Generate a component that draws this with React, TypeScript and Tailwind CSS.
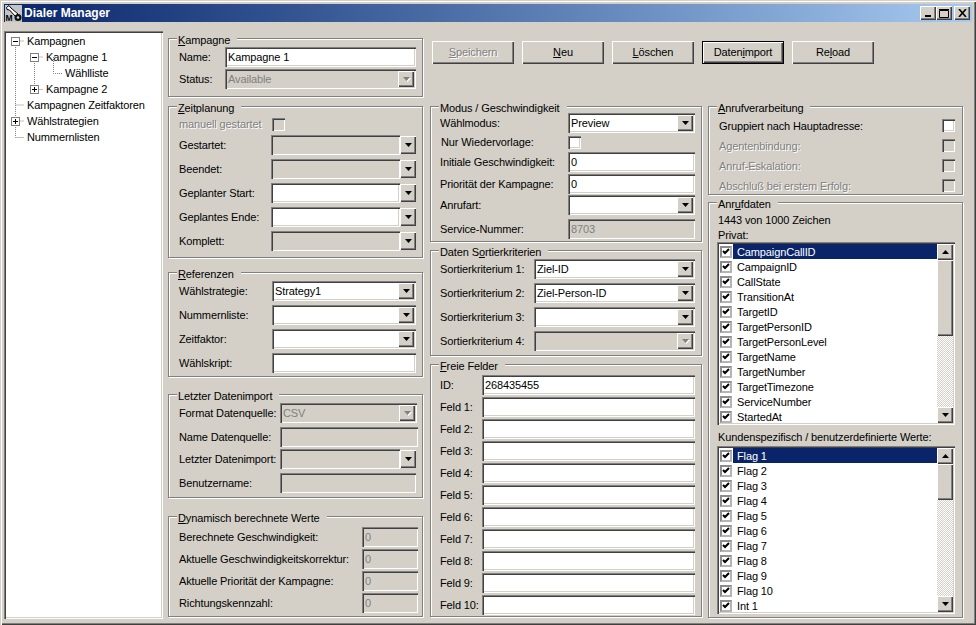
import React from "react";

const raised =
  "bg-[#d4d0c8] shadow-[inset_1px_1px_0_#fff,inset_-1px_-1px_0_#404040,inset_-2px_-2px_0_#808080]";
const sunken =
  "shadow-[inset_1px_1px_0_#808080,inset_2px_2px_0_#404040,inset_-1px_-1px_0_#fff,inset_-2px_-2px_0_#d4d0c8]";
const grayed = "text-[#808080] [text-shadow:1px_1px_0_#fff]";

const Arrow = ({ off }: { off?: boolean }) => (
  <svg width="7" height="4" viewBox="0 0 7 4" className={off ? "drop-shadow-[1px_1px_0_#fff]" : ""}>
    <path d="M0 0h7L3.5 4z" fill={off ? "#808080" : "#000"} />
  </svg>
);

const ArrowBtn = ({ off, className = "" }: { off?: boolean; className?: string }) => (
  <div className={`${raised} w-[16px] flex items-center justify-center shrink-0 ${className}`}>
    <Arrow off={off} />
  </div>
);

// plain edit field, white unless disabled
const Field = ({ className = "", off, text }: { className?: string; off?: boolean; text?: string }) => (
  <div
    className={`${sunken} h-[20px] leading-[21px] pl-[3px] shrink-0 ${off ? "bg-[#d4d0c8] text-[#808080]" : "bg-white"} ${className}`}
  >
    {text}
  </div>
);

const Combo = ({ className = "", off, text }: { className?: string; off?: boolean; text?: string }) => (
  <div
    className={`${sunken} relative h-[20px] leading-[21px] pl-[3px] shrink-0 ${off ? "bg-[#d4d0c8] text-[#808080]" : "bg-white"} ${className}`}
  >
    {text}
    <ArrowBtn off={off} className="absolute right-[2px] top-[2px] h-[16px]" />
  </div>
);

// date picker style: field with the arrow button beside it
const DateField = ({ off }: { off?: boolean }) => (
  <div className="flex">
    <Field off={off} className="w-[129px]" />
    <ArrowBtn className="h-[18px] mt-[1px]" />
  </div>
);

const Group = ({
  title,
  className = "",
  children,
}: {
  title: React.ReactNode;
  className?: string;
  children: React.ReactNode;
}) => (
  <div
    className={`relative border border-[#808080] shadow-[inset_1px_1px_0_#fff,1px_1px_0_#fff] ${className}`}
  >
    <div className="absolute left-[8px] top-[-6px] h-[14px] leading-[14px] bg-[#d4d0c8] pl-[1px] pr-[7px]">{title}</div>
    {children}
  </div>
);

const U = ({ children }: { children: React.ReactNode }) => <span className="underline underline-offset-1">{children}</span>;

const Row = ({
  label,
  labelClass,
  children,
  className = "",
}: {
  label: string;
  labelClass: string;
  children: React.ReactNode;
  className?: string;
}) => (
  <div className={`flex items-center h-[20px] ${className}`}>
    <div className={`shrink-0 whitespace-nowrap pt-[1px] ${labelClass}`}>{label}</div>
    {children}
  </div>
);

const CheckBox = ({ off }: { off?: boolean }) => (
  <div className={`${sunken} w-[13px] h-[13px] shrink-0 ${off ? "bg-[#d4d0c8]" : "bg-white"}`} />
);

const Tick = () => (
  <div className="w-[12px] h-[12px] ml-[1px] shrink-0 bg-white border-2 border-[#8c8c8c] border-b-[#b4b4b4] border-r-[#b4b4b4] flex items-center justify-center">
    <svg width="8" height="7" viewBox="0 0 8 7">
      <path d="M1 3l2 2 4-4" fill="none" stroke="#000" strokeWidth="2" />
    </svg>
  </div>
);

const ScrollBar = ({ thumbClass }: { thumbClass: string }) => (
  <div className="w-[16px] shrink-0 h-full flex flex-col bg-[repeating-conic-gradient(#fff_0_25%,#d4d0c8_0_50%)] bg-[length:2px_2px]">
    <div className={`${raised} h-[16px] shrink-0 flex items-center justify-center`}>
      <svg width="7" height="4" viewBox="0 0 7 4">
        <path d="M0 4h7L3.5 0z" fill="#000" />
      </svg>
    </div>
    <div className={`${raised} shrink-0 ${thumbClass}`} />
    <div className="flex-1" />
    <div className={`${raised} h-[16px] shrink-0 flex items-center justify-center`}>
      <Arrow />
    </div>
  </div>
);

const CheckList = ({ items, className, thumbClass }: { items: string[]; className: string; thumbClass: string }) => (
  <div className={`${sunken} bg-white p-[2px] flex w-[238px] ${className}`}>
    <div className="flex-1 overflow-hidden">
      {items.map((item, i) => (
        <div key={item} className="flex items-center h-[15px]">
          <Tick />
          <div className={`flex-1 ml-[1px] pl-[4px] h-[15px] leading-[16px] ${i === 0 ? "bg-[#0a246a] text-white" : ""}`}>
            {item}
          </div>
        </div>
      ))}
    </div>
    <ScrollBar thumbClass={thumbClass} />
  </div>
);

const Btn = ({ children, off, main }: { children: React.ReactNode; off?: boolean; main?: boolean }) => (
  <button
    className={`${raised} w-[82px] h-[23px] flex items-center justify-center ${off ? grayed : ""} ${main ? "outline outline-1 outline-black -outline-offset-1 shadow-[inset_2px_2px_0_#fff,inset_-2px_-2px_0_#404040,inset_-3px_-3px_0_#808080]" : ""}`}
  >
    <span>{children}</span>
  </button>
);

const Tree = () => (
  <div className={`${sunken} relative bg-white w-[159px] h-[588px] shrink-0 pt-[2px]`}>
    <svg width="159" height="140" className="absolute left-0 top-0">
      <g stroke="#808080" strokeDasharray="1 1" fill="none">
        <path d="M11.5 10V106.5M11.5 10H20M11.5 74H20M11.5 90H20M11.5 106.5H20" />
        <path d="M30.5 26V58.5M30.5 26H39M30.5 58.5H39" />
        <path d="M49.5 26V42.5H58" />
      </g>
      {[
        [7, 6, true],
        [26, 22, true],
        [26, 54, false],
        [7, 86, false],
      ].map(([x, y, open]) => (
        <g key={`${x}-${y}`}>
          <rect x={Number(x) + 0.5} y={Number(y) + 0.5} width="8" height="8" fill="#fff" stroke="#808080" />
          <path d={`M${Number(x) + 2} ${Number(y) + 4.5}h5`} stroke="#000" />
          {!open && <path d={`M${Number(x) + 4.5} ${Number(y) + 2}v5`} stroke="#000" />}
        </g>
      ))}
    </svg>
    {[
      ["Kampagnen", "pl-[23px]"],
      ["Kampagne 1", "pl-[42px]"],
      ["Wählliste", "pl-[61px]"],
      ["Kampagne 2", "pl-[42px]"],
      ["Kampagnen Zeitfaktoren", "pl-[23px]"],
      ["Wählstrategien", "pl-[23px]"],
      ["Nummernlisten", "pl-[23px]"],
    ].map(([t, c]) => (
      <div key={t} className={`relative h-[16px] leading-[17px] ${c}`}>
        {t}
      </div>
    ))}
  </div>
);

const AppIcon = () => (
  <svg width="17" height="17" viewBox="0 0 17 17" className="shrink-0">
    <rect width="17" height="17" fill="#c4c4c4" />
    <path d="M1.5 2.5L4 0.5 6 3l7 6-2.5 2.5-6-6.5-2.5-.5z" fill="#fff" stroke="#000" strokeWidth="1" />
    <circle cx="13" cy="12.5" r="3.5" fill="#111" />
    <circle cx="13" cy="12.5" r="1.2" fill="#ddd" />
    <text x="0.5" y="16" fontSize="8.5" fontWeight="700" fill="#000">M</text>
  </svg>
);

const TitleBtn = ({ children, className = "" }: { children: React.ReactNode; className?: string }) => (
  <div className={`${raised} w-[16px] h-[14px] flex items-center justify-center ${className}`}>{children}</div>
);

const CheckRow = ({ label, off }: { label: string; off?: boolean }) => (
  <div className="flex items-center justify-between h-[20px]">
    <div className={`pt-[2px] ${off ? grayed : ""}`}>{label}</div>
    <CheckBox off={off} />
  </div>
);

const privat = [
  "CampaignCallID",
  "CampaignID",
  "CallState",
  "TransitionAt",
  "TargetID",
  "TargetPersonID",
  "TargetPersonLevel",
  "TargetName",
  "TargetNumber",
  "TargetTimezone",
  "ServiceNumber",
  "StartedAt",
];

const kunden = ["Flag 1", "Flag 2", "Flag 3", "Flag 4", "Flag 5", "Flag 6", "Flag 7", "Flag 8", "Flag 9", "Flag 10", "Int 1"];

const freie = ["Feld 1:", "Feld 2:", "Feld 3:", "Feld 4:", "Feld 5:", "Feld 6:", "Feld 7:", "Feld 8:", "Feld 9:", "Feld 10:"];

export default function App() {
  return (
    <div className="w-[976px] h-[625px] overflow-hidden bg-[#d4d0c8] text-black text-[11px] tracking-[-0.12px] font-['Liberation_Sans',sans-serif] flex flex-col pt-[4px] px-[4px] shadow-[inset_1px_1px_0_#d4d0c8,inset_2px_2px_0_#fff,inset_-1px_-1px_0_#404040,inset_-2px_-2px_0_#808080]">
      {/* title bar */}
      <div className="h-[18px] shrink-0 flex items-center pl-[1px] pr-[2px] bg-gradient-to-r from-[#0a246a] to-[#a6caf0]">
        <AppIcon />
        <div className="ml-[2px] text-white font-bold text-[12px] tracking-normal flex-1">Dialer Manager</div>
        <TitleBtn>
          <svg width="8" height="8" viewBox="0 0 8 8"><path d="M1 6h6v2H1z" /></svg>
        </TitleBtn>
        <TitleBtn>
          <svg width="10" height="9" viewBox="0 0 10 9"><path d="M0.5 1.5h9v7h-9z" fill="none" stroke="#000" /><path d="M0 0.5h10" stroke="#000" /></svg>
        </TitleBtn>
        <TitleBtn className="ml-[2px]">
          <svg width="9" height="8" viewBox="0 0 9 8"><path d="M1 0l7 8M8 0L1 8" stroke="#000" strokeWidth="1.6" /></svg>
        </TitleBtn>
      </div>

      <div className="flex pt-[9px]">
        <Tree />

        {/* left column */}
        <div className="ml-[5px] w-[255px] shrink-0 pt-[7px] flex flex-col">
          <Group title={<><U>K</U>ampagne</>} className="h-[59px] pt-[8px] pl-[10px] flex flex-col gap-[2px]">
            <Row label="Name:" labelClass="w-[46px]"><Field text="Kampagne 1" className="w-[191px]" /></Row>
            <Row label="Status:" labelClass="w-[46px]"><Combo off text="Available" className="w-[191px]" /></Row>
          </Group>

          <Group title={<><U>Z</U>eitplanung</>} className="mt-[9px] h-[152px] pt-[10px] pl-[10px] flex flex-col gap-[4px]">
            <div className="flex items-center h-[14px]">
              <div className={`w-[93px] ${grayed}`}>manuell gestartet</div>
              <CheckBox off />
            </div>
            <Row label="Gestartet:" labelClass="w-[92px]"><DateField off /></Row>
            <Row label="Beendet:" labelClass="w-[92px]"><DateField off /></Row>
            <Row label="Geplanter Start:" labelClass="w-[92px]"><DateField /></Row>
            <Row label="Geplantes Ende:" labelClass="w-[92px]"><DateField /></Row>
            <Row label="Komplett:" labelClass="w-[92px]"><DateField off /></Row>
          </Group>

          <Group title={<><U>R</U>eferenzen</>} className="mt-[14px] h-[105px] pt-[8px] pl-[10px] flex flex-col gap-[4px]">
            <Row label="Wählstrategie:" labelClass="w-[93px]"><Combo text="Strategy1" className="w-[144px]" /></Row>
            <Row label="Nummernliste:" labelClass="w-[93px]"><Combo className="w-[144px]" /></Row>
            <Row label="Zeitfaktor:" labelClass="w-[93px]"><Combo className="w-[144px]" /></Row>
            <Row label="Wählskript:" labelClass="w-[93px]"><Field className="w-[144px]" /></Row>
          </Group>

          <Group title="Letzter Datenimport" className="mt-[17px] h-[104px] pt-[8px] pl-[10px] flex flex-col">
            <Row label="Format Datenquelle:" labelClass="w-[101px]"><Combo off text="CSV" className="w-[137px]" /></Row>
            <Row label="Name Datenquelle:" labelClass="w-[101px]" className="mt-[4px]"><Field off className="w-[138px]" /></Row>
            <Row label="Letzter Datenimport:" labelClass="w-[101px]" className="mt-[2px]">
              <Field off className="w-[120px]" />
              <ArrowBtn className="h-[18px]" />
            </Row>
            <Row label="Benutzername:" labelClass="w-[101px]" className="mt-[4px]"><Field off className="w-[136px]" /></Row>
          </Group>

          <Group title={<><U>D</U>ynamisch berechnete Werte</>} className="mt-[18px] h-[101px] pt-[10px] pl-[10px] flex flex-col gap-[2px]">
            <Row label="Berechnete Geschwindigkeit:" labelClass="w-[183px]"><Field off text="0" className="w-[56px]" /></Row>
            <Row label="Aktuelle Geschwindigkeitskorrektur:" labelClass="w-[183px]"><Field off text="0" className="w-[56px]" /></Row>
            <Row label="Aktuelle Priorität der Kampagne:" labelClass="w-[183px]"><Field off text="0" className="w-[56px]" /></Row>
            <Row label="Richtungskennzahl:" labelClass="w-[183px]"><Field off text="0" className="w-[56px]" /></Row>
          </Group>
        </div>

        {/* buttons and the two right columns */}
        <div className="ml-[7px] flex flex-col">
          <div className="pl-[2px] pt-[10px] flex gap-[8px] h-[33px]">
            <Btn off><U>S</U>peichern</Btn>
            <Btn><U>N</U>eu</Btn>
            <Btn><U>L</U>öschen</Btn>
            <Btn main>Daten<U>i</U>mport</Btn>
            <Btn>Re<U>l</U>oad</Btn>
          </div>

          <div className="flex mt-[42px]">
            <div className="w-[272px] flex flex-col">
              <Group title="Modus / Geschwindigkeit" className="h-[136px] pt-[6px] pl-[9px] flex flex-col">
                <Row label="Wählmodus:" labelClass="w-[128px]"><Combo text="Preview" className="w-[127px]" /></Row>
                <div className="flex items-center h-[17px] mt-[1px] pl-[1px]">
                  <div className="w-[127px]">Nur Wiedervorlage:</div>
                  <CheckBox />
                </div>
                <Row label="Initiale Geschwindigkeit:" labelClass="w-[128px]" className="mt-[1px]"><Field text="0" className="w-[127px]" /></Row>
                <Row label="Priorität der Kampagne:" labelClass="w-[128px]" className="mt-[2px]"><Field text="0" className="w-[127px]" /></Row>
                <Row label="Anrufart:" labelClass="w-[128px]" className="mt-[1px]"><Combo className="w-[127px]" /></Row>
                <Row label="Service-Nummer:" labelClass="w-[128px]" className="mt-[4px]"><Field off text="8703" className="w-[127px]" /></Row>
              </Group>

              <Group title={<>Daten S<U>o</U>rtierkriterien</>} className="mt-[8px] h-[106px] pt-[8px] pl-[9px] flex flex-col gap-[4px]">
                <Row label="Sortierkriterium 1:" labelClass="w-[94px]"><Combo text="Ziel-ID" className="w-[161px]" /></Row>
                <Row label="Sortierkriterium 2:" labelClass="w-[94px]"><Combo text="Ziel-Person-ID" className="w-[161px]" /></Row>
                <Row label="Sortierkriterium 3:" labelClass="w-[94px]"><Combo className="w-[161px]" /></Row>
                <Row label="Sortierkriterium 4:" labelClass="w-[94px]"><Combo off className="w-[161px]" /></Row>
              </Group>

              <Group title={<><U>F</U>reie Felder</>} className="mt-[8px] h-[253px] pt-[10px] pl-[9px] flex flex-col gap-[2px]">
                <Row label="ID:" labelClass="w-[42px]"><Field text="268435455" className="w-[213px]" /></Row>
                {freie.map((f) => (
                  <Row key={f} label={f} labelClass="w-[42px]"><Field className="w-[213px]" /></Row>
                ))}
              </Group>
            </div>

            <div className="ml-[6px] w-[255px] flex flex-col">
              <Group title={<><U>A</U>nrufverarbeitung</>} className="h-[89px] pt-[8px] pl-[10px] pr-[7px]">
                <CheckRow label="Gruppiert nach Hauptadresse:" />
                <CheckRow label="Agentenbindung:" off />
                <CheckRow label="Anruf-Eskalation:" off />
                <CheckRow label="Abschluß bei erstem Erfolg:" off />
              </Group>

              <Group title={<>Anr<U>u</U>fdaten</>} className="mt-[7px] h-[416px] pt-[9px] pl-[8px]">
                <div className="h-[16px] leading-[17px] pl-[1px]">1443 von 1000 Zeichen</div>
                <div className="h-[14px] leading-[15px] pl-[1px]">Privat:</div>
                <CheckList items={privat} className="h-[183px]" thumbClass="h-[76px]" />
                <div className="h-[21px] leading-[21px] pl-[1px] pt-[2px] whitespace-nowrap">Kundenspezifisch / benutzerdefinierte Werte:</div>
                <CheckList items={kunden} className="h-[168px]" thumbClass="h-[36px]" />
              </Group>
            </div>
          </div>
        </div>
      </div>
    </div>
  );
}
